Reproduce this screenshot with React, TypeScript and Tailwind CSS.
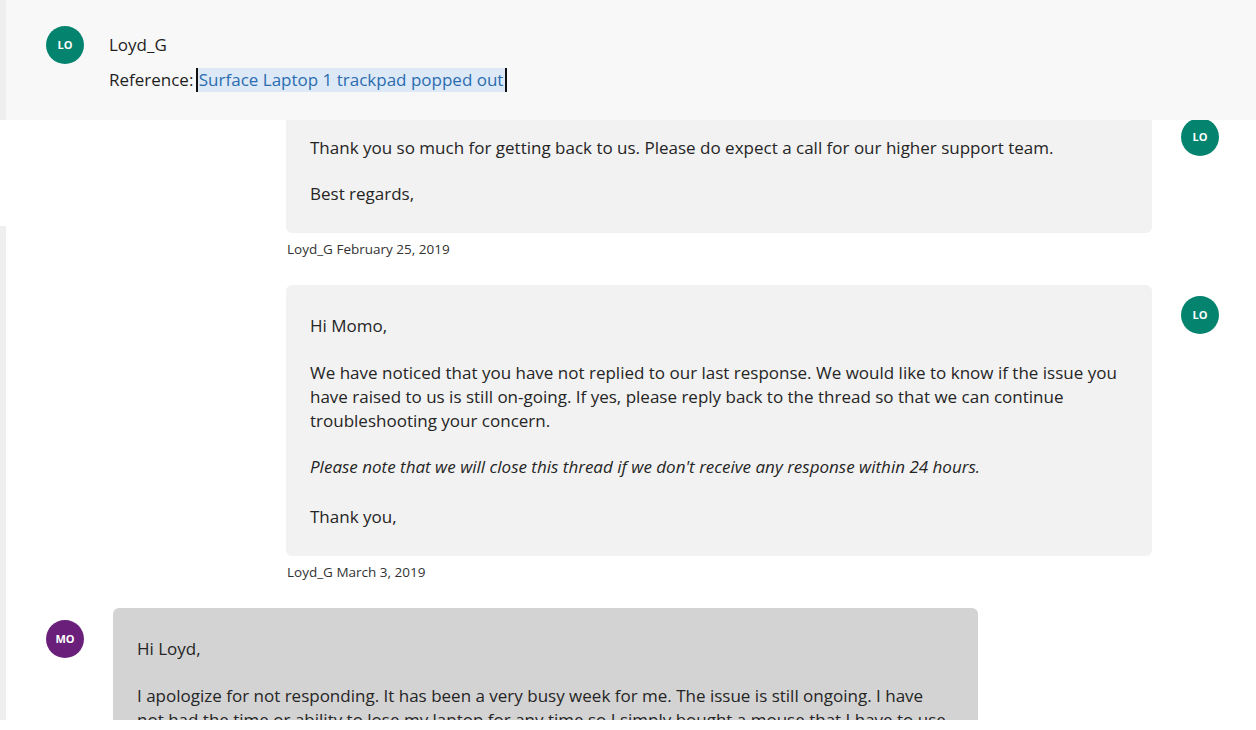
import React from "react";

const Avatar = ({ initials, color }: { initials: string; color: string }) => (
  <div
    className={`flex h-[38px] w-[38px] shrink-0 items-center justify-center rounded-full text-[11px] font-bold text-white ${color}`}
  >
    {initials}
  </div>
);

const AgentMessage = ({ children, meta }: { children: React.ReactNode; meta: string }) => (
  <div className="flex flex-col">
    <div className="flex items-start">
      <div className="ml-[280px] w-[866px] rounded-md bg-[#f2f2f2] px-6 pt-[29px] pb-[27px]">
        {children}
      </div>
      <div className="ml-[29px] mt-[11px]">
        <Avatar initials="LO" color="bg-[#04836f]" />
      </div>
    </div>
    <div className="ml-[281px] mt-[7px] text-[13.5px] leading-[18px] text-[#333]">{meta}</div>
  </div>
);

export default function App() {
  return (
    <div className="relative h-[730px] w-[1256px] overflow-hidden bg-white font-['Open_Sans',sans-serif] text-[17px] leading-[24px] text-[#252525]">
      <div className="flex h-[720px] overflow-hidden">
        <div className="flex w-[6px] shrink-0 flex-col">
          <div className="h-[226px] bg-white" />
          <div className="flex-1 bg-[#efeff0]" />
        </div>
        <div className="flex flex-1 flex-col gap-[27px] pt-[107px]">
          <AgentMessage meta="Loyd_G February 25, 2019">
            <p>Thank you so much for getting back to us. Please do expect a call for our higher support team.</p>
            <p className="mt-[22px]">Best regards,</p>
          </AgentMessage>
          <AgentMessage meta="Loyd_G March 3, 2019">
            <p>Hi Momo,</p>
            <p className="mt-[23px]">
              We have noticed that you have not replied to our last response. We would like to know if the issue you
              have raised to us is still on-going. If yes, please reply back to the thread so that we can continue
              troubleshooting your concern.
            </p>
            <p className="mt-[22px] italic">Please note that we will close this thread if we don't receive any response within 24 hours.</p>
            <p className="mt-[26px]">Thank you,</p>
          </AgentMessage>
          <div className="flex items-start">
            <div className="ml-[40px] mt-[12px]">
              <Avatar initials="MO" color="bg-[#6a1f7b]" />
            </div>
            <div className="ml-[29px] w-[865px] rounded-md bg-[#d3d3d3] px-6 pt-[29px] pb-[27px]">
              <p>Hi Loyd,</p>
              <p className="mt-[23px]">
                I apologize for not responding. It has been a very busy week for me. The issue is still ongoing. I have
                not had the time or ability to lose my laptop for any time so I simply bought a mouse that I have to
                use in the meantime. I would still like to have it looked at when I can.
              </p>
            </div>
          </div>
        </div>
      </div>

      {/* sticky thread header lying over the list */}
      <div className="absolute left-0 right-0 top-0 flex h-[120px] bg-[#f8f8f8]">
        <div className="w-[6px] bg-[#efeff0]" />
        <div className="flex items-start pl-[40px] pt-[26px]">
          <Avatar initials="LO" color="bg-[#04836f]" />
          <div className="ml-[25px] flex flex-col text-[17px]">
            <div className="mt-[6px] leading-[26px] text-[#1f1f1f]">Loyd_G</div>
            <div className="mt-[10px] flex items-center leading-[24px] text-[#1f1f1f]">
              <span>Reference:&nbsp;</span>
              <span className="-ml-[2px] border-l-2 border-r-2 border-[#111] bg-[#dde9f6] pl-px pr-[2px] text-[#2b6cb0]">
                Surface Laptop 1 trackpad popped out
              </span>
            </div>
          </div>
        </div>
      </div>
    </div>
  );
}
